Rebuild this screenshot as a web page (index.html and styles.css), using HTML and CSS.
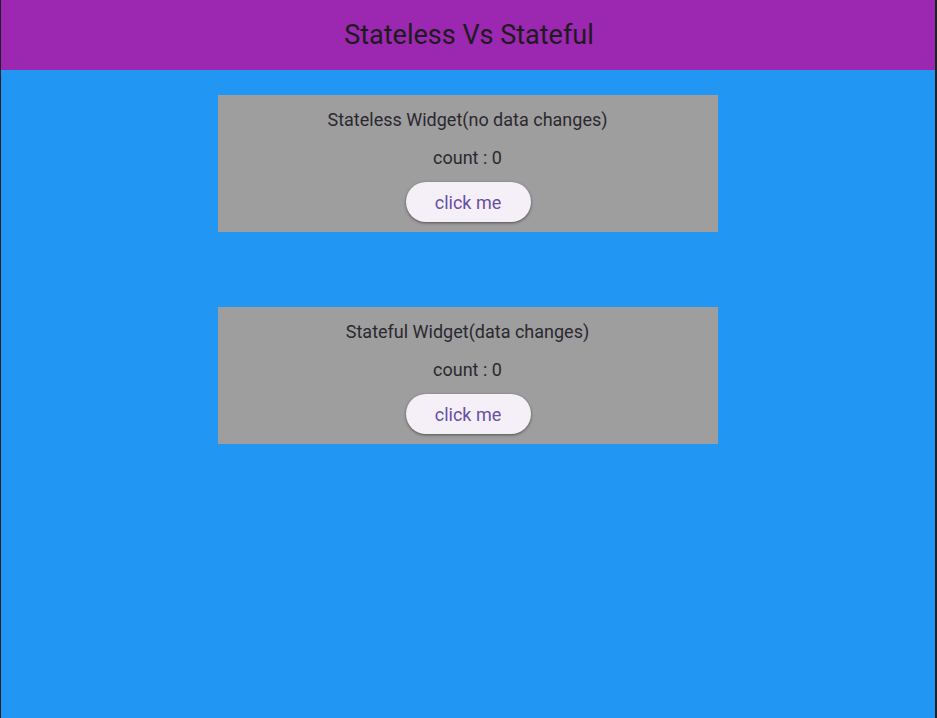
FILE: index.html
```html
<!DOCTYPE html>
<html>
<head>
<meta charset="utf-8">
<link rel="stylesheet" href="styles.css">
</head>
<body>
<div class="app">
  <header class="appbar"><h1 class="title">Stateless Vs Stateful</h1></header>
  <main class="content">
    <section class="card">
      <p class="card-title">Stateless Widget(no data changes)</p>
      <p class="count">count : 0</p>
      <button class="btn">click me</button>
    </section>
    <section class="card">
      <p class="card-title">Stateful Widget(data changes)</p>
      <p class="count">count : 0</p>
      <button class="btn">click me</button>
    </section>
  </main>
</div>
</body>
</html>
```
FILE: styles.css
```css
html, body {
  margin: 0;
  padding: 0;
  height: 100%;
}
body {
  font-family: Roboto, "Liberation Sans", sans-serif;
  background: #1f2128;
}
.app {
  height: 718px;
  margin: 0 2px 0 1px;
  background: #2196F3;
  display: flex;
  flex-direction: column;
}
.appbar {
  height: 70px;
  background: #9C27B0;
  display: flex;
  align-items: center;
  justify-content: center;
  flex-shrink: 0;
  padding-left: 2px;
}
.title {
  margin: 0;
  font-size: 27px;
  font-weight: 400;
  color: #1d1b20;
  line-height: 32px;
}
.content {
  display: flex;
  flex-direction: column;
  align-items: center;
  padding-top: 25px;
  gap: 75px;
  padding-right: 1px;
}
.card {
  width: 500px;
  height: 137px;
  box-sizing: border-box;
  background: #9E9E9E;
  display: flex;
  flex-direction: column;
  align-items: center;
  padding-top: 13px;
}
.card-title, .count {
  margin: 0;
  font-size: 18px;
  line-height: 24px;
  color: #2b2930;
}
.count {
  margin-top: 14px;
}
.btn {
  margin-top: 12px;
  margin-left: 1px;
  width: 125px;
  height: 40px;
  border: none;
  border-radius: 20px;
  background: #F5EFF7;
  color: #6750A4;
  font-family: Roboto, "Liberation Sans", sans-serif;
  font-size: 18px;
  box-shadow: 0 1px 2px rgba(0,0,0,0.3), 0 1px 3px 1px rgba(0,0,0,0.15);
  padding: 0;
}
```
